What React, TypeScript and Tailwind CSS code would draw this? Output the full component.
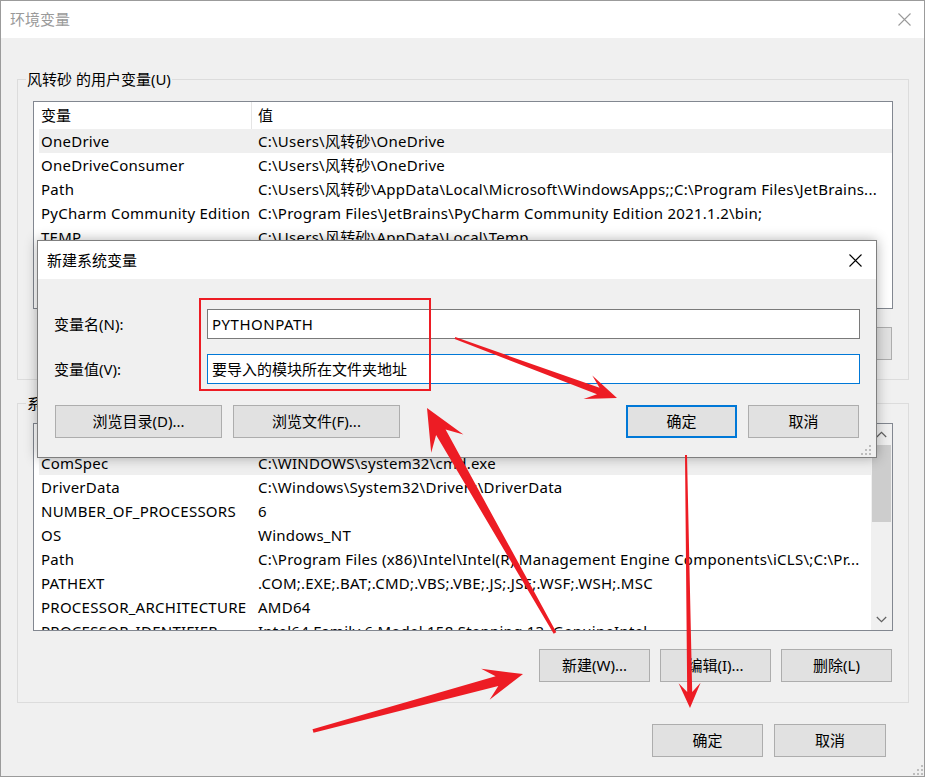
import React from "react";

type Row = [string, string];
type P = [number, number];

const userRows: Row[] = [
  ["OneDrive", "C:\\Users\\风转砂\\OneDrive"],
  ["OneDriveConsumer", "C:\\Users\\风转砂\\OneDrive"],
  ["Path", "C:\\Users\\风转砂\\AppData\\Local\\Microsoft\\WindowsApps;;C:\\Program Files\\JetBrains..."],
  ["PyCharm Community Edition", "C:\\Program Files\\JetBrains\\PyCharm Community Edition 2021.1.2\\bin;"],
  ["TEMP", "C:\\Users\\风转砂\\AppData\\Local\\Temp"],
  ["TMP", "C:\\Users\\风转砂\\AppData\\Local\\Temp"],
];

const sysRows: Row[] = [
  ["ComSpec", "C:\\WINDOWS\\system32\\cmd.exe"],
  ["DriverData", "C:\\Windows\\System32\\Drivers\\DriverData"],
  ["NUMBER_OF_PROCESSORS", "6"],
  ["OS", "Windows_NT"],
  ["Path", "C:\\Program Files (x86)\\Intel\\Intel(R) Management Engine Components\\iCLS\\;C:\\Pr..."],
  ["PATHEXT", ".COM;.EXE;.BAT;.CMD;.VBS;.VBE;.JS;.JSE;.WSF;.WSH;.MSC"],
  ["PROCESSOR_ARCHITECTURE", "AMD64"],
  ["PROCESSOR_IDENTIFIER", "Intel64 Family 6 Model 158 Stepping 13, GenuineIntel"],
];

// tapered annotation arrow, like the screenshot tool draws
function arrowPoints(tail: P, tip: P, headLen: number, headHalf: number, neckLen: number, neckHalf: number, tailHalf: number) {
  const dx = tip[0] - tail[0];
  const dy = tip[1] - tail[1];
  const len = Math.hypot(dx, dy);
  const ux = dx / len;
  const uy = dy / len;
  const nx = -uy;
  const ny = ux;
  const at = (d: number, o: number): P => [tip[0] - ux * d + nx * o, tip[1] - uy * d + ny * o];
  const pts: P[] = [
    [tail[0] + nx * tailHalf, tail[1] + ny * tailHalf],
    at(neckLen, neckHalf),
    at(headLen, headHalf),
    tip,
    at(headLen, -headHalf),
    at(neckLen, -neckHalf),
    [tail[0] - nx * tailHalf, tail[1] - ny * tailHalf],
  ];
  return pts.map((p) => `${p[0].toFixed(1)},${p[1].toFixed(1)}`).join(" ");
}

function CloseX({ className }: { className: string }) {
  return (
    <svg width="13" height="13" viewBox="0 0 13 13" className={className}>
      <path d="M0.5 0.5L12.5 12.5M12.5 0.5L0.5 12.5" stroke="currentColor" strokeWidth="1.1" />
    </svg>
  );
}

function Grip() {
  return (
    <svg width="10" height="10" viewBox="0 0 10 10">
      <g fill="#bdbdbd">
        <rect x="8" y="0" width="2" height="2" />
        <rect x="4" y="4" width="2" height="2" />
        <rect x="8" y="4" width="2" height="2" />
        <rect x="0" y="8" width="2" height="2" />
        <rect x="4" y="8" width="2" height="2" />
        <rect x="8" y="8" width="2" height="2" />
      </g>
    </svg>
  );
}

function WinButton({ children, className = "", primary = false }: { children: React.ReactNode; className?: string; primary?: boolean }) {
  return (
    <div
      className={`flex h-[33px] items-center justify-center bg-[#e1e1e1] text-[15px] text-black ${
        primary ? "border-2 border-[#0078d7]" : "border border-[#adadad]"
      } ${className}`}
    >
      {children}
    </div>
  );
}

function Scrollbar() {
  return (
    <div className="flex w-[21px] shrink-0 flex-col bg-[#f0f0f0]">
      <div className="flex h-[21px] items-center justify-center">
        <svg width="11" height="7" viewBox="0 0 11 7">
          <path d="M0.8 6L5.5 1.3L10.2 6" fill="none" stroke="#606060" strokeWidth="1.2" />
        </svg>
      </div>
      <div className="mx-px h-[77px] bg-[#cdcdcd]" />
      <div className="flex-1" />
      <div className="flex h-[21px] items-center justify-center">
        <svg width="11" height="7" viewBox="0 0 11 7">
          <path d="M0.8 1L5.5 5.7L10.2 1" fill="none" stroke="#606060" strokeWidth="1.2" />
        </svg>
      </div>
    </div>
  );
}

function VarList({ rows, scroll = false }: { rows: Row[]; scroll?: boolean }) {
  return (
    <div className="flex h-[208px] overflow-hidden border border-[#828790] bg-white">
      <div className="min-w-0 flex-1 overflow-hidden pl-[5px]">
        <div className="flex h-[27px] items-center">
          <div className="flex h-full w-[213px] shrink-0 items-center border-r border-[#e5e5e5] pl-[2px]">变量</div>
          <div className="pl-[6px]">值</div>
        </div>
        {rows.map(([k, v], i) => (
          <div
            key={k + i}
            className={`flex h-[24px] items-center whitespace-nowrap leading-[24px] tracking-[0.25px] ${i === 0 ? "bg-[#efefef]" : ""}`}
          >
            <div className="w-[213px] shrink-0 pl-[2px]">{k}</div>
            <div className="pl-[6px]">{v}</div>
          </div>
        ))}
      </div>
      {scroll && <Scrollbar />}
    </div>
  );
}

function GroupBox({
  title,
  rows,
  scroll,
  className,
  listClass,
}: {
  title: string;
  rows: Row[];
  scroll?: boolean;
  className: string;
  listClass: string;
}) {
  return (
    <fieldset className={`ml-[16px] mr-[15px] border border-[#dcdcdc] ${className}`}>
      <legend className="ml-[8px] px-px leading-[20px]">{title}</legend>
      <div className="px-[15px]">
        <div className={listClass}>
          <VarList rows={rows} scroll={scroll} />
        </div>
        <div className="mt-[18px] flex justify-end gap-[10px] pr-px">
          <WinButton className="w-[111px]">新建(W)...</WinButton>
          <WinButton className="w-[111px]">编辑(I)...</WinButton>
          <WinButton className="w-[111px]">删除(L)</WinButton>
        </div>
      </div>
    </fieldset>
  );
}

function NewVarDialog() {
  return (
    <div className="absolute left-[36px] top-[239px] flex h-[218px] w-[840px] flex-col border border-[#7f7f7f] bg-[#f0f0f0] shadow-[0_0_12px_rgba(0,0,0,0.3)]">
      <div className="flex h-[38px] shrink-0 items-center justify-between bg-white pl-[9px] pr-[14px]">
        <span>新建系统变量</span>
        <CloseX className="text-black" />
      </div>
      <div className="flex-1 px-[16px] pt-[30px]">
        <div className="flex h-[30px] items-center">
          <div className="w-[153px] shrink-0">变量名(N):</div>
          <div className="flex h-full flex-1 items-center border border-[#7a7a7a] bg-white pl-[4px] tracking-[0.5px]">PYTHONPATH</div>
        </div>
        <div className="mt-[15px] flex h-[30px] items-center">
          <div className="w-[153px] shrink-0">变量值(V):</div>
          <div className="flex h-full flex-1 items-center border border-[#0078d7] bg-white pl-[4px]">要导入的模块所在文件夹地址</div>
        </div>
        <div className="mt-[21px] flex items-center pl-px">
          <WinButton className="w-[167px]">浏览目录(D)...</WinButton>
          <WinButton className="ml-[11px] w-[167px]">浏览文件(F)...</WinButton>
          <div className="flex-1" />
          <WinButton primary className="w-[111px]">确定</WinButton>
          <WinButton className="ml-[11px] mr-px w-[111px]">取消</WinButton>
        </div>
      </div>
      <div className="absolute bottom-[2px] right-[5px]">
        <Grip />
      </div>
    </div>
  );
}

function Annotations() {
  const red = "#ed1c24";
  return (
    <svg className="pointer-events-none absolute -left-px -top-px h-[777px] w-[925px]" viewBox="0 0 925 777">
      <rect x="200" y="299" width="230" height="91" fill="none" stroke={red} strokeWidth="2" />
      <polygon fill={red} points={arrowPoints([455, 338], [617, 398], 31, 12.5, 20, 3.5, 1)} />
      <polygon fill={red} points={arrowPoints([555, 633], [427, 408], 41, 18.5, 28, 5.5, 1.5)} />
      <polygon fill={red} points={arrowPoints([686, 455], [690, 708], 25, 11, 16, 2.5, 1)} />
      <polygon fill={red} points={arrowPoints([313, 731], [523, 674], 39, 16, 27, 5, 1.8)} />
    </svg>
  );
}

export default function App() {
  return (
    <div className="relative h-[777px] w-[925px] overflow-hidden border border-[#9b9b9b] bg-[#f0f0f0] font-[family-name:'Noto_Sans','Noto_Sans_CJK_SC',sans-serif] text-[15px] text-black">
      <div className="flex h-[37px] items-center justify-between bg-white pl-[9px] pr-[13px]">
        <span className="text-[#9a9a9a]">环境变量</span>
        <CloseX className="text-[#9a9a9a]" />
      </div>

      <GroupBox className="mt-[31px] pb-[19px]" listClass="mt-[12px]" title="风转砂 的用户变量(U)" rows={userRows} />
      <GroupBox className="mt-[13px] pb-[20px]" listClass="mt-[10px]" title="系统变量(S)" rows={sysRows} scroll />

      <div className="mt-[21px] flex justify-end gap-[11px] pr-[38px]">
        <WinButton className="w-[111px]">确定</WinButton>
        <WinButton className="w-[112px]">取消</WinButton>
      </div>

      <div className="absolute bottom-px right-px">
        <Grip />
      </div>

      <NewVarDialog />
      <Annotations />
    </div>
  );
}
